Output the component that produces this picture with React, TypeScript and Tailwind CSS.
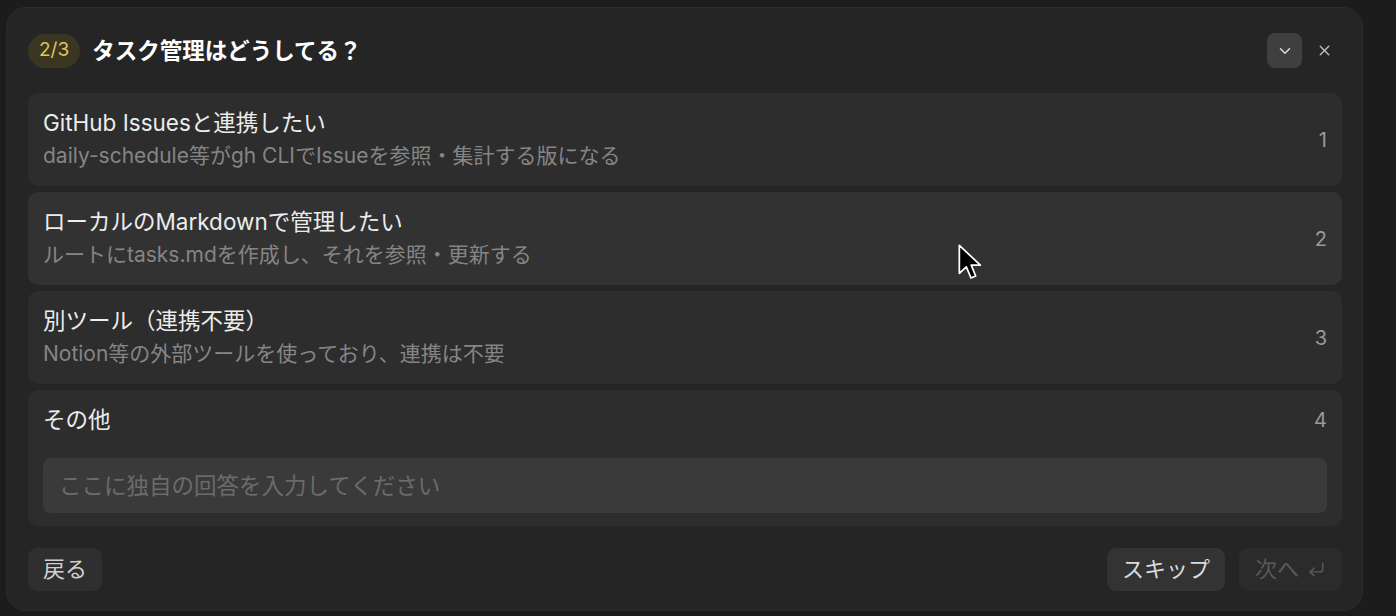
import { ChevronDown, X, CornerDownLeft } from "lucide-react";

const options = [
  {
    title: "GitHub Issuesと連携したい",
    desc: "daily-schedule等がgh CLIでIssueを参照・集計する版になる",
  },
  {
    title: "ローカルのMarkdownで管理したい",
    desc: "ルートにtasks.mdを作成し、それを参照・更新する",
    hover: true,
  },
  {
    title: "別ツール（連携不要）",
    desc: "Notion等の外部ツールを使っており、連携は不要",
  },
];

const font = {
  fontFamily: '"Inter", "Noto Sans CJK JP", sans-serif',
};

function Cursor() {
  return (
    <svg
      className="absolute left-[957px] top-[243px]"
      width="28"
      height="42"
      viewBox="0 0 24 36"
    >
      <path
        d="M2 2 L2 26 L8 20.5 L12 30 L16 28.3 L12.2 19 L20 19 Z"
        fill="#000"
        stroke="#fff"
        strokeWidth="1.5"
        strokeLinejoin="round"
      />
    </svg>
  );
}

export default function App() {
  return (
    <div
      className="relative h-[616px] w-[1396px] bg-[#1c1c1c] pt-[7px] pl-[6px]"
      style={font}
    >
      <div className="flex h-[604px] w-[1357px] flex-col rounded-[20px] border border-[#2c2c2c] bg-[#252525] pl-[21px] pr-[20px] pt-[25px]">
        {/* header */}
        <div className="flex h-[35px] items-center">
          <span className="flex h-[34px] items-center rounded-full bg-[#3b3621] px-[11px] text-[19px] text-[#e3c35a]">
            2/3
          </span>
          <h1 className="ml-[12px] text-[22.5px] font-bold text-white">
            タスク管理はどうしてる？
          </h1>
          <div className="ml-auto flex items-center gap-[14px] pr-[9px]">
            <button className="flex h-[35px] w-[35px] items-center justify-center rounded-[8px] bg-[#3f3f3f] text-[#dcdcdc]">
              <ChevronDown size={18} strokeWidth={2} />
            </button>
            <button className="text-[#bdbdbd]">
              <X size={17} strokeWidth={2} />
            </button>
          </div>
        </div>

        {/* options */}
        <div className="mt-[25px] flex flex-col gap-[6px]">
          {options.map((o, i) => (
            <div
              key={i}
              className={`flex h-[93px] items-center rounded-[10px] px-[15px] ${
                o.hover ? "bg-[#323232]" : "bg-[#2d2d2d]"
              }`}
            >
              <div className="flex flex-col gap-[3px]">
                <span className="text-[22.5px] leading-[30px] text-[#ececec]">
                  {o.title}
                </span>
                <span className="text-[21px] leading-[30px] text-[#858585]">
                  {o.desc}
                </span>
              </div>
              <span className="ml-auto text-[20px] text-[#9a9a9a]">{i + 1}</span>
            </div>
          ))}
          <div className="flex h-[136px] flex-col rounded-[10px] bg-[#2d2d2d] px-[15px] pt-[15px]">
            <div className="flex h-[30px] items-center">
              <span className="text-[22.5px] text-[#ececec]">その他</span>
              <span className="ml-auto text-[20px] text-[#9a9a9a]">4</span>
            </div>
            <input
              placeholder="ここに独自の回答を入力してください"
              className="mt-[23px] h-[55px] w-full rounded-[8px] bg-[#3a3a3a] px-[16px] text-[22.5px] text-[#ececec] outline-none placeholder:text-[#6b6b6b]"
              style={font}
            />
          </div>
        </div>

        {/* footer */}
        <div className="mt-[22px] flex items-center">
          <button className="h-[43px] rounded-[9px] bg-[#2f2f2f] px-[15px] text-[22px] text-[#d0d0d0]">
            戻る
          </button>
          <div className="ml-auto flex items-center gap-[14px]">
            <button className="h-[43px] rounded-[9px] bg-[#333333] px-[15px] text-[22px] text-[#dadada]">
              スキップ
            </button>
            <button className="flex h-[43px] items-center gap-[8px] rounded-[9px] bg-[#2b2b2b] px-[16px] text-[22px] text-[#5a5a5a]">
              次へ
              <CornerDownLeft size={19} strokeWidth={1.8} />
            </button>
          </div>
        </div>
      </div>
      <Cursor />
    </div>
  );
}
